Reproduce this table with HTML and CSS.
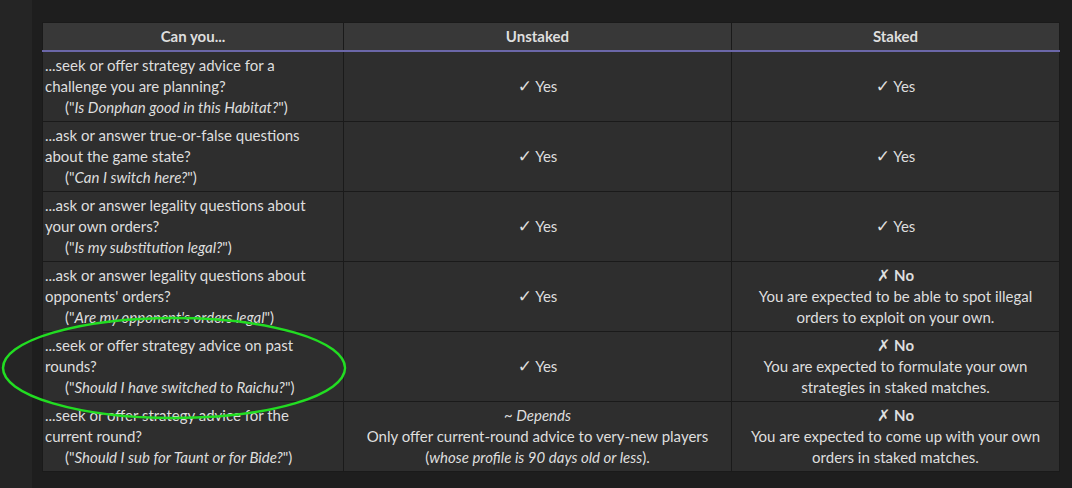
FILE: index.html
```html
<!DOCTYPE html>
<html>
<head>
<meta charset="utf-8">
<link rel="stylesheet" href="styles.css">
</head>
<body>
<div class="page">
  <div class="sidebar"></div>
  <main class="content">
    <table class="rules">
      <colgroup><col class="c1"><col class="c2"><col class="c3"></colgroup>
      <thead>
        <tr><th>Can you...</th><th>Unstaked</th><th>Staked</th></tr>
      </thead>
      <tbody>
        <tr>
          <td class="q">...seek or offer strategy advice for a challenge you are planning?<br><span class="ex">("<i>Is Donphan good in this Habitat?</i>")</span></td>
          <td class="a"><span class="g">✓</span> Yes</td>
          <td class="a s"><span class="g">✓</span> Yes</td>
        </tr>
        <tr>
          <td class="q">...ask or answer true-or-false questions about the game state?<br><span class="ex">("<i>Can I switch here?</i>")</span></td>
          <td class="a"><span class="g">✓</span> Yes</td>
          <td class="a s"><span class="g">✓</span> Yes</td>
        </tr>
        <tr>
          <td class="q">...ask or answer legality questions about your own orders?<br><span class="ex">("<i>Is my substitution legal?</i>")</span></td>
          <td class="a"><span class="g">✓</span> Yes</td>
          <td class="a s"><span class="g">✓</span> Yes</td>
        </tr>
        <tr>
          <td class="q">...ask or answer legality questions about opponents' orders?<br><span class="ex">("<i>Are my opponent's orders legal</i>")</span></td>
          <td class="a"><span class="g">✓</span> Yes</td>
          <td class="a s"><b><span class="g x">✗</span> No</b><br>You are expected to be able to spot illegal orders to exploit on your own.</td>
        </tr>
        <tr>
          <td class="q">...seek or offer strategy advice on past rounds?<br><span class="ex">("<i>Should I have switched to Raichu?</i>")</span></td>
          <td class="a"><span class="g">✓</span> Yes</td>
          <td class="a s"><b><span class="g x">✗</span> No</b><br>You are expected to formulate your own strategies in staked matches.</td>
        </tr>
        <tr>
          <td class="q">...seek or offer strategy advice for the current round?<br><span class="ex">("<i>Should I sub for Taunt or for Bide?</i>")</span></td>
          <td class="a"><i>~ Depends</i><br>Only offer current-round advice to very-new players<br>(<i>whose profile is 90 days old or less</i>).</td>
          <td class="a s"><b><span class="g x">✗</span> No</b><br>You are expected to come up with your own orders in staked matches.</td>
        </tr>
      </tbody>
    </table>
    <svg class="circle" width="360" height="120" viewBox="0 0 360 120" aria-hidden="true">
      <ellipse cx="178" cy="58" rx="171" ry="50" fill="none" stroke="#22dd22" stroke-width="2.5"/>
    </svg>
  </main>
</div>
</body>
</html>
```

FILE: styles.css
```css
html, body {
  margin: 0;
  padding: 0;
  background: #1e1e1e;
}
.page {
  display: flex;
  width: 1072px;
  height: 488px;
  overflow: hidden;
}
.sidebar {
  width: 32px;
  flex: none;
  background: #252525;
}
.content {
  position: relative;
  flex: 1;
  padding: 22px 0 0 10px;
}
.rules {
  border-collapse: collapse;
  table-layout: fixed;
  width: 1017px;
  font-family: "Lato", sans-serif;
  font-size: 15px;
  line-height: 21px;
  color: #dedede;
}
.c1 { width: 301px; }
.c2 { width: 388px; }
.c3 { width: 328px; }
.rules th {
  background: #383838;
  font-weight: bold;
  height: 27px;
  padding: 0 2px;
  border: 1px solid #1a1a1a;
  border-bottom: 2px solid #6b67a8;
  text-align: center;
}
.rules td {
  background: #2e2e2e;
  border: 1px solid #1a1a1a;
  height: 63px;
  padding: 3px 2px;
  vertical-align: middle;
}
.rules td.q { padding-right: 10px; }
.rules td.a { text-align: center; }
.rules td.s { padding-left: 12px; padding-right: 12px; }
.g {
  font-family: "DejaVu Sans", sans-serif;
  font-size: 17px;
  line-height: 0;
}
.g.x { font-size: 16px; }
.ex { padding-left: 20px; }
.circle {
  position: absolute;
  left: -36px;
  top: 310px;
}
```
